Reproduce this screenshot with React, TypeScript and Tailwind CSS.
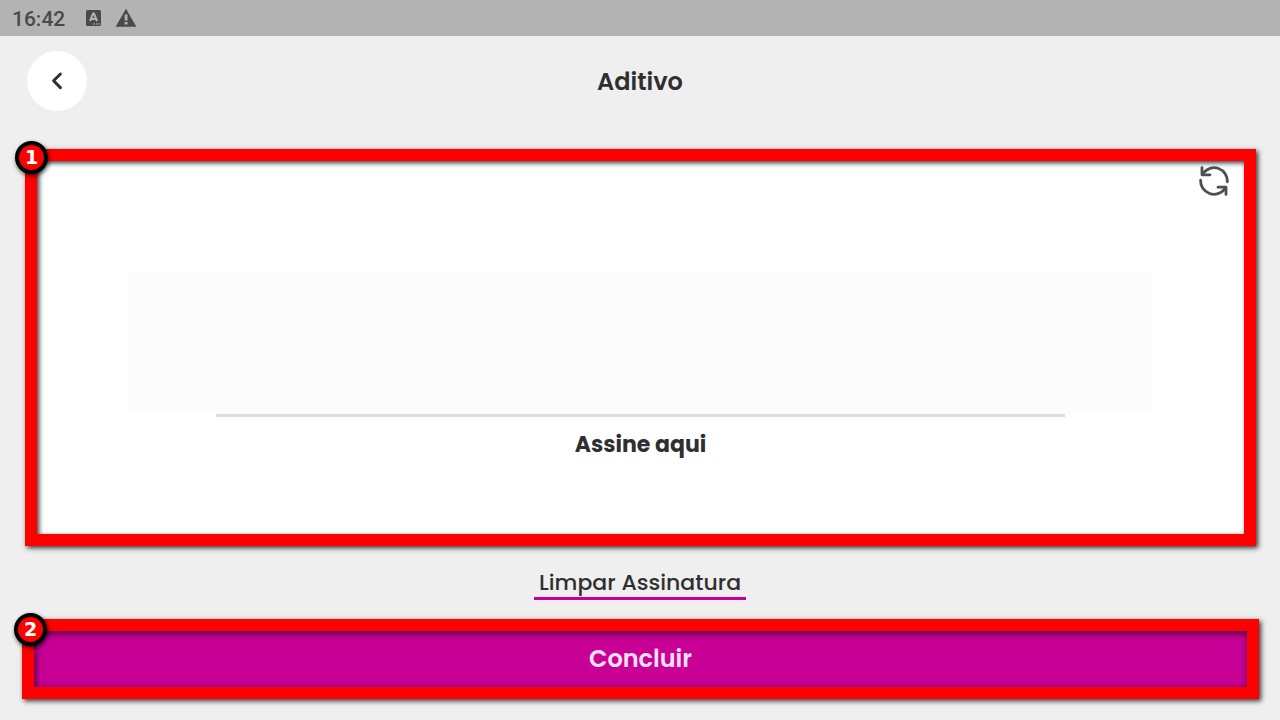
import type { ReactNode } from "react";

function StatusBar() {
  return (
    <div className="flex h-9 items-center bg-[#b3b3b3] px-3 text-[#4a4a4a]">
      <span className="w-[74px] pt-0.5 font-[Roboto,sans-serif] text-[21px] leading-8 font-medium">
        16:42
      </span>
      <svg className="h-4 w-4" viewBox="0 0 16 16" aria-hidden="true">
        <rect x="0" y="0" width="15" height="16" rx="1.5" fill="currentColor" />
        <path d="M4 11.2 7.1 3.6h.9l3.1 7.6M5.3 8.9h4.5" fill="none" stroke="#b3b3b3" strokeWidth="2" />
        <path d="M7.4 14h1.3M9.9 14h1.3M12.4 14h1.3" stroke="#b3b3b3" strokeWidth="1.4" />
      </svg>
      <svg className="ml-3 h-5 w-6" viewBox="0 0 24 20" aria-hidden="true">
        <path d="M12 0.8 22.4 18.8H1.6z" fill="currentColor" />
        <path d="M10.7 6.6h2.8v6h-2.8zM10.7 14h2.8v2.6h-2.8z" fill="#b3b3b3" />
      </svg>
    </div>
  );
}

function Badge({ children }: { children: ReactNode }) {
  return (
    <span className="flex h-[33px] w-[33px] items-center justify-center rounded-full border-4 border-black bg-[#fe0000] font-['DejaVu_Sans',sans-serif] text-[19px] leading-none font-bold text-white shadow-[1px_2px_4px_rgba(0,0,0,0.7)]">
      {children}
    </span>
  );
}

function RefreshIcon() {
  return (
    <svg
      className="h-8 w-8"
      viewBox="0 0 32 32"
      fill="none"
      stroke="currentColor"
      strokeWidth="2.8"
      strokeLinecap="round"
      strokeLinejoin="round"
      aria-hidden="true"
    >
      <path d="M5.2 8.2A13.4 13.4 0 0 1 29.4 16.8" />
      <path d="M26.8 23.8A13.4 13.4 0 0 1 2.6 15.2" />
      <path d="M4 2.6v7.2h8" />
      <path d="M28 29.4v-7.2h-8" />
    </svg>
  );
}

export default function App() {
  return (
    <div className="flex min-h-screen flex-col bg-[#efefef] font-[Poppins,Inter,sans-serif] text-[#2f2f2f]">
      <StatusBar />

      <header className="grid grid-cols-[60px_1fr_60px] items-center px-[27px] pt-[15px]">
        <button
          aria-label="Voltar"
          className="flex h-[60px] w-[60px] items-center justify-center rounded-full bg-white"
        >
          <svg className="h-5 w-5" viewBox="0 0 20 20" fill="none" aria-hidden="true">
            <path
              d="M13.4 3 6.6 9.8l6.8 6.8"
              stroke="currentColor"
              strokeWidth="3"
              strokeLinecap="round"
              strokeLinejoin="round"
            />
          </svg>
        </button>
        <h1 className="pt-0.5 text-center text-2xl leading-8 font-semibold">Aditivo</h1>
      </header>

      <main className="flex flex-1 flex-col pb-[21px]">
        {/* Signature area */}
        <section className="relative mt-[38px] mr-6 ml-[25px] flex flex-1 flex-col border-12 border-[#fe0000] bg-white shadow-[2px_2px_5px_rgba(0,0,0,0.8),inset_2px_2px_5px_rgba(0,0,0,0.8)]">
          <div className="absolute -top-5 -left-[22px]">
            <Badge>1</Badge>
          </div>
          <button
            aria-label="Atualizar"
            className="absolute top-1 right-[14px] text-[#4b4f54]"
          >
            <RefreshIcon />
          </button>
          <div className="flex flex-1 flex-col justify-center px-[91px] pt-9">
            <div className="h-[143px] bg-[#fcfcfc]" />
            <div className="mx-[88px] h-[3px] bg-[#dcdcdc]" />
            <p className="mt-3 text-center text-[22px] leading-8 font-bold">Assine aqui</p>
          </div>
        </section>

        <button className="mt-[19px] self-center border-b-3 border-[#c80096] px-[5px] pt-1 text-[22px] leading-7 font-medium">
          Limpar Assinatura
        </button>

        {/* Confirm */}
        <div className="relative mt-[19px] mr-[21px] ml-[22px]">
          <button className="block w-full border-12 border-[#fe0000] bg-[#c80096] py-3 text-2xl leading-8 font-semibold text-[#ffe0f6] shadow-[2px_2px_5px_rgba(0,0,0,0.8),inset_1px_2px_7px_rgba(0,0,0,0.7)]">
            Concluir
          </button>
          <div className="absolute -top-1.5 -left-2">
            <Badge>2</Badge>
          </div>
        </div>
      </main>
    </div>
  );
}
